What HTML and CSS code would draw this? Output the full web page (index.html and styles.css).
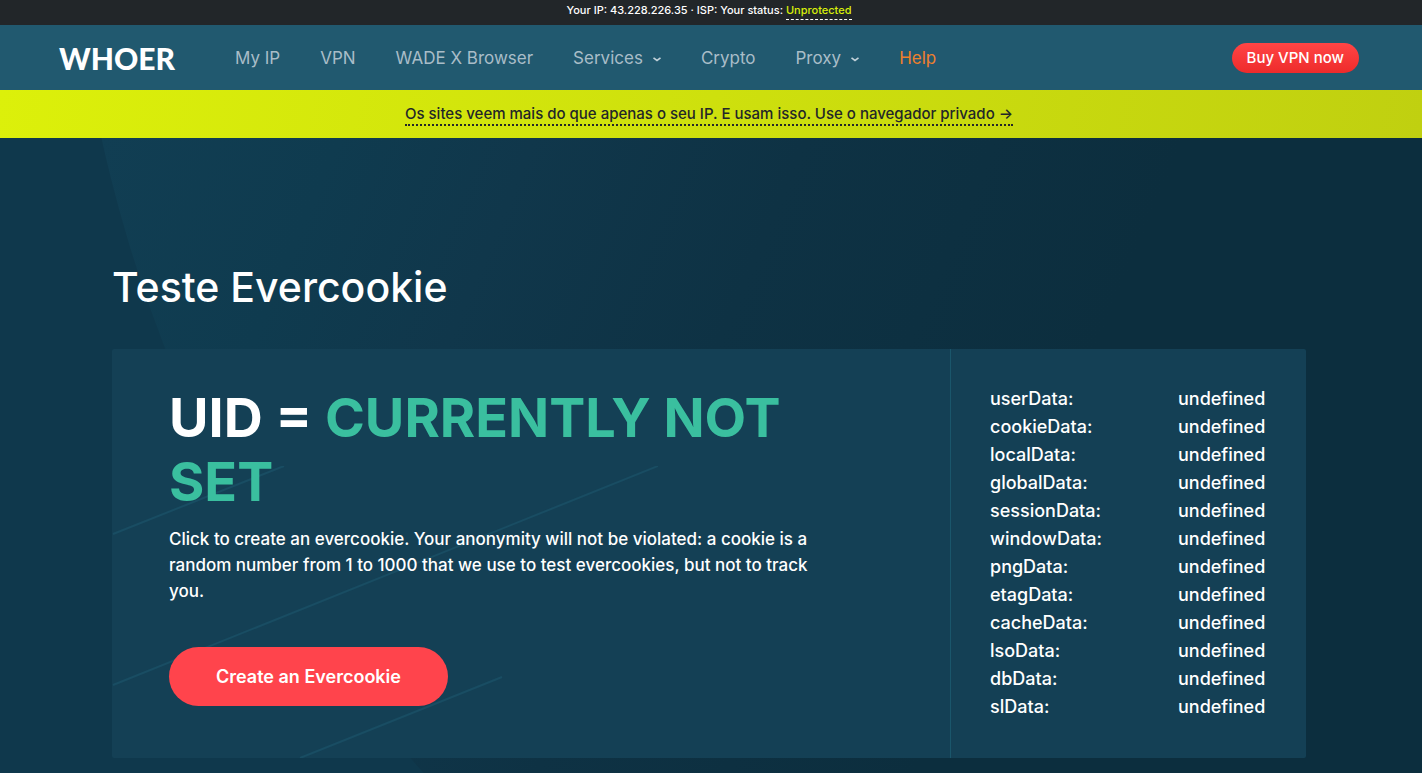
FILE: index.html
```html
<!DOCTYPE html>
<html lang="pt">

<head>
    <meta charset="UTF-8">
    <meta name="viewport" content="width=device-width, initial-scale=1.0">
    <title>Teste Evercookie</title>
    <link rel="stylesheet" href="styles.css">
</head>

<body>
    <div class="status-bar">Your IP: 43.228.226.35 · ISP: Your status: <a href="#">Unprotected</a></div>

    <header class="header">
        <a href="#" class="logo">WHOER</a>
        <nav class="nav">
            <a href="#">My IP</a>
            <a href="#">VPN</a>
            <a href="#">WADE X Browser</a>
            <a href="#" class="has-menu">Services
                <svg width="8" height="5" viewBox="0 0 8 5"><path d="M0.5 0.8L4 3.4l3.5-2.6"/></svg>
            </a>
            <a href="#">Crypto</a>
            <a href="#" class="has-menu">Proxy
                <svg width="8" height="5" viewBox="0 0 8 5"><path d="M0.5 0.8L4 3.4l3.5-2.6"/></svg>
            </a>
            <a href="#" class="help">Help</a>
        </nav>
        <button type="button" class="buy">Buy VPN now</button>
    </header>

    <div class="promo"><a href="#">Os sites veem mais do que apenas o seu IP. E usam isso. Use o navegador privado →</a></div>

    <main class="hero">
        <svg class="hero-bg" width="2920" height="1119" viewBox="0 0 2920 1119" aria-hidden="true">
            <defs>
                <linearGradient id="shade" gradientUnits="userSpaceOnUse" x1="100" y1="0" x2="1020" y2="390">
                    <stop offset="0" stop-color="#113e53"/>
                    <stop offset="0.22" stop-color="#0f3b4f"/>
                    <stop offset="0.4" stop-color="#10374b"/>
                    <stop offset="0.65" stop-color="#0e3244"/>
                    <stop offset="1" stop-color="#0c2e3e"/>
                </linearGradient>
            </defs>
            <circle cx="1494" cy="-307" r="1426" fill="url(#shade)"/>
        </svg>
        <h1>Teste Evercookie</h1>
        <div class="panel">
            <section class="create">
                <svg class="lines" width="546" height="292" viewBox="0 0 546 292" aria-hidden="true">
                    <path d="M1 68L172 0M1 219L546 0M188 292l202-81"/>
                </svg>
                <h2>UID = <span>CURRENTLY NOT SET</span></h2>
                <p>Click to create an evercookie. Your anonymity will not be violated: a cookie is a random number from 1 to 1000 that we use to test evercookies, but not to track you.</p>
                <button type="button" class="create-btn">Create an Evercookie</button>
            </section>
            <section class="data">
                <table>
                    <tr><th scope="row">userData:</th><td>undefined</td></tr>
                    <tr><th scope="row">cookieData:</th><td>undefined</td></tr>
                    <tr><th scope="row">localData:</th><td>undefined</td></tr>
                    <tr><th scope="row">globalData:</th><td>undefined</td></tr>
                    <tr><th scope="row">sessionData:</th><td>undefined</td></tr>
                    <tr><th scope="row">windowData:</th><td>undefined</td></tr>
                    <tr><th scope="row">pngData:</th><td>undefined</td></tr>
                    <tr><th scope="row">etagData:</th><td>undefined</td></tr>
                    <tr><th scope="row">cacheData:</th><td>undefined</td></tr>
                    <tr><th scope="row">lsoData:</th><td>undefined</td></tr>
                    <tr><th scope="row">dbData:</th><td>undefined</td></tr>
                    <tr><th scope="row">slData:</th><td>undefined</td></tr>
                </table>
            </section>
        </div>
    </main>
</body>

</html>
```

FILE: styles.css
```css
* {
    box-sizing: border-box;
}
body {
    margin: 0;
    min-height: 100vh;
    display: flex;
    flex-direction: column;
    background: #0f384c;
    color: #fff;
    font-family: Inter, "Liberation Sans", sans-serif;
    font-size: 18px;
}
a {
    color: inherit;
    text-decoration: none;
}
button {
    border: none;
    color: #fff;
    font-family: inherit;
    cursor: pointer;
}

/* top bars */
.status-bar {
    height: 25px;
    padding-right: 4px;
    background: #222629;
    font-size: 11px;
    font-weight: 500;
    line-height: 20px;
    text-align: center;
}
.status-bar a {
    padding-bottom: 2px;
    border-bottom: 1px dashed #fff;
    color: #d9ef0a;
}
.header {
    display: flex;
    align-items: center;
    height: 65px;
    padding: 0 63px 0 59px;
    background: #21596f;
}
.logo {
    width: 176px;
    font-family: Lato, sans-serif;
    font-size: 30px;
    font-weight: 900;
}
.nav {
    display: flex;
    gap: 40px;
    color: #a9bdc8;
    font-size: 17px;
    line-height: 26px;
    white-space: nowrap;
}
.has-menu {
    display: flex;
    align-items: center;
    gap: 10px;
}
.has-menu svg {
    margin-top: 3px;
    fill: none;
    stroke: #c3d2da;
    stroke-width: 1.6;
}
.help {
    color: #ee7f2d;
}
.buy {
    height: 30px;
    margin-left: auto;
    padding: 0 15px;
    border-radius: 15px;
    background: linear-gradient(#ff4545, #ee2b2b);
    font-size: 15px;
    font-weight: 500;
    white-space: nowrap;
}
.promo {
    height: 48px;
    padding-right: 4px;
    background: linear-gradient(100deg, #dcf00a, #c0d010);
    color: #222629;
    font-size: 15px;
    font-weight: 500;
    line-height: 48px;
    text-align: center;
}
.promo a {
    padding-bottom: 1px;
    border-bottom: 2px dotted #222629;
}

/* content */
.hero {
    position: relative;
    flex: 1;
    padding: 119px 116px 15px 112px;
    overflow: hidden;
}
.hero-bg {
    position: absolute;
    top: 0;
    left: 0;
}
h1 {
    position: relative;
    margin: 0 0 32px;
    font-size: 41px;
    font-weight: 500;
    line-height: 60px;
}
.panel {
    position: relative;
    display: flex;
    border-radius: 2px;
    background: #144055;
}
.create {
    position: relative;
    flex: 1;
    padding: 37px 57px 52px;
}
.lines {
    position: absolute;
    left: 0;
    bottom: 0;
    fill: none;
    stroke: #194d63;
    stroke-width: 2;
}
h2 {
    position: relative;
    margin: 0;
    font-size: 54px;
    font-weight: 700;
    line-height: 64px;
}
h2 span {
    color: #3abf9f;
}
.create p {
    position: relative;
    max-width: 670px;
    margin: 12px 0 43px;
    font-size: 17px;
    font-weight: 500;
    line-height: 26px;
}
.create-btn {
    position: relative;
    height: 59px;
    padding: 0 47px;
    border-radius: 30px;
    background: #ff444c;
    font-size: 18px;
    font-weight: 600;
}
.data {
    width: 356px;
    padding: 36px 39px;
    border-left: 1px solid #1a566b;
}
table {
    border-collapse: collapse;
    line-height: 28px;
}
th, td {
    padding: 0;
    font-weight: 500;
    text-align: left;
}
th {
    width: 188px;
}
```
